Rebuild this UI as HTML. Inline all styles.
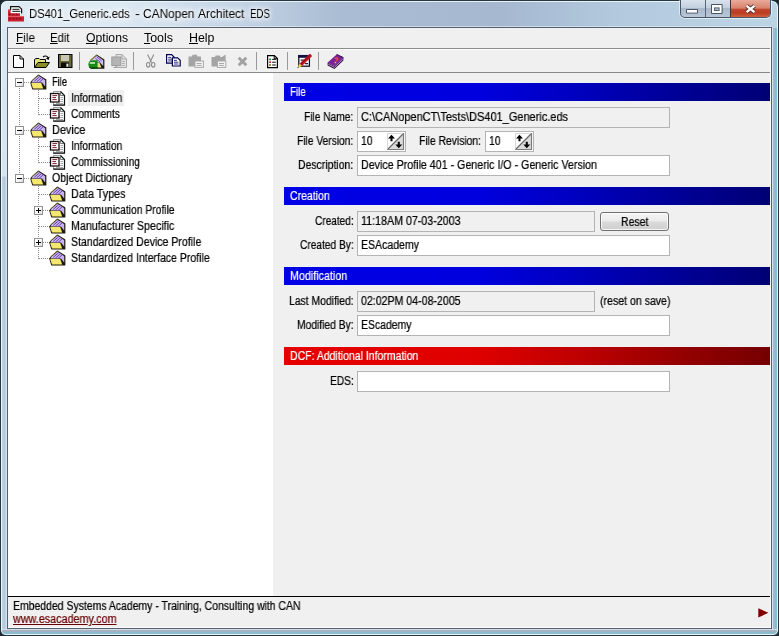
<!DOCTYPE html>
<html>
<head>
<meta charset="utf-8">
<title>DS401_Generic.eds - CANopen Architect EDS</title>
<style>
html,body{margin:0;padding:0;}
body{width:779px;height:636px;overflow:hidden;position:relative;background:#1c2a30;font-family:"Liberation Sans",sans-serif;font-size:12px;color:#000;}
.abs{position:absolute;}
svg{position:absolute;overflow:visible;}
#frame{position:absolute;left:0;top:0;width:777px;height:634px;border:1px solid #2a3640;border-radius:7px 7px 6px 6px;overflow:hidden;
 background:linear-gradient(90deg,#deeaf3 0,#dce8f2 120px,#c3d3e5 240px,#a9bcd3 340px,#a5b8d0 500px,#b3cade 620px,#bcd5e5 777px);}
#frame .hl{position:absolute;left:0;top:0;width:777px;height:634px;border-radius:6px 6px 5px 5px;box-shadow:inset 0 0 0 1px rgba(240,250,255,.85);}
#frame .bl{position:absolute;left:1px;top:27px;width:5px;height:602px;background:linear-gradient(180deg,#dbe7f2 0,#d8e5f1 148px,rgba(216,229,241,0) 149px),linear-gradient(90deg,#bfd2e3,#b2c8dc 60%,#d0e2f2 81%);}
#frame .br{position:absolute;left:771px;top:27px;width:6px;height:602px;background:linear-gradient(90deg,#d5e5ea 0,#d5e5ea 17%,#a8bccf 18%,#90b6d0 60%,#80c0d8 75%,#7fc0d8 100%);}
#frame .bb{position:absolute;left:1px;top:628px;width:775px;height:6px;background:linear-gradient(180deg,#d5dde8 0,#d5dde8 17%,#a5b2c2 18%,#a2b3c4 50%,#8abccc 55%,#8abfd0 100%);}
#client{position:absolute;left:7px;top:27px;width:763px;height:600px;border:1px solid #56616d;background:#f0f0f0;}
.t{position:absolute;white-space:pre;line-height:14px;height:14px;transform-origin:0 0;will-change:transform;-webkit-text-stroke:0.22px currentColor;}
.hdr{position:absolute;left:284px;width:486px;height:18px;}
.blue{background:linear-gradient(90deg,#0000e6 0%,#0000de 40%,#0000c0 60%,#000098 80%,#000074 100%);}
.red{background:linear-gradient(90deg,#e60000 0%,#de0000 40%,#c00000 60%,#980000 80%,#740000 100%);}
.fld{position:absolute;height:19px;border:1px solid #b4b4b4;background:#fff;}
.ro{background:#f0f0f0;}
.spin{position:absolute;width:17px;height:17px;}
.vdot{position:absolute;width:1px;background-image:linear-gradient(180deg,#8c8c8c 50%,transparent 50%);background-size:1px 2px;}
.hdot{position:absolute;height:1px;background-image:linear-gradient(90deg,#8c8c8c 50%,transparent 50%);background-size:2px 1px;}
.box{position:absolute;width:7px;height:7px;border:1px solid #919191;background:linear-gradient(135deg,#fff 40%,#d8d8d8);}
.box i{position:absolute;left:1px;top:3px;width:5px;height:1px;background:#000;}
.box b{position:absolute;left:3px;top:1px;width:1px;height:5px;background:#000;}
.sep{position:absolute;top:52px;width:1px;height:18px;background:#9a9a9a;}
</style>
</head>
<body>
<div id="frame"><div class="bl"></div><div class="br"></div><div class="bb"></div><div class="hl"></div></div>
<div class="abs" style="left:8px;top:26px;width:763px;height:1px;background:rgba(235,245,252,.55);"></div>
<div id="client"></div>
<!-- caption buttons -->
<div class="abs" style="left:680px;top:0;width:91px;height:18px;border:1px solid #4a5663;border-top:none;border-radius:0 0 5px 5px;box-sizing:border-box;overflow:hidden;background:linear-gradient(180deg,#d9e3ee 0,#c3d0df 45%,#a9b9cb 50%,#b9c8d8 100%);box-shadow:0 0 0 1px rgba(255,255,255,.55);">
 <div class="abs" style="left:24px;top:0;width:1px;height:18px;background:#5a6673;"></div>
 <div class="abs" style="left:49px;top:0;width:42px;height:18px;border-left:1px solid #4a3030;background:linear-gradient(180deg,#e9ab9c 0,#d8836d 45%,#c0462c 52%,#bb3c22 72%,#d76a48 100%);"></div>
</div>
<svg style="left:680px;top:0" width="91" height="18" viewBox="0 0 91 18">
 <rect x="6" y="9" width="12" height="4.6" rx="1" fill="#4b5563"/>
 <rect x="7" y="10" width="10" height="2.6" fill="#fff"/>
 <rect x="31" y="4" width="11.6" height="10" rx="1" fill="#4b5563"/>
 <rect x="32" y="5" width="9.6" height="8" fill="#fff"/>
 <rect x="34" y="7.4" width="5.6" height="3.6" fill="#56606e"/>
 <rect x="35" y="8.4" width="3.6" height="1.6" fill="#a9b9ca"/>
 <path d="M66.6 5.9 L74.4 12.1 M74.4 5.9 L66.6 12.1" stroke="#55302c" stroke-width="4.2" stroke-linecap="butt"/>
 <path d="M66.6 5.9 L74.4 12.1 M74.4 5.9 L66.6 12.1" stroke="#fff" stroke-width="2.4" stroke-linecap="butt"/>
</svg>
<!-- tree panel -->
<div class="abs" style="left:8px;top:73px;width:265px;height:523px;background:#fff;"></div>
<!-- bar lines -->
<div class="abs" style="left:8px;top:48px;width:763px;height:1px;background:#8c8c8c;"></div>
<div class="abs" style="left:8px;top:49px;width:763px;height:1px;background:#fff;"></div>
<div class="abs" style="left:8px;top:72px;width:763px;height:1px;background:#888;"></div>
<div class="abs" style="left:8px;top:596px;width:762px;height:1px;background:#000;"></div>
<div class="abs" style="left:770px;top:28px;width:1px;height:600px;background:#fcfcff;"></div>
<div class="abs" style="left:8px;top:627px;width:763px;height:1px;background:#fcfcff;"></div>
<!-- toolbar separators -->
<div class="sep" style="left:79px"></div><div class="sep" style="left:133px"></div><div class="sep" style="left:256px"></div><div class="sep" style="left:287px"></div><div class="sep" style="left:318px"></div>
<!-- tree selection -->
<div class="abs" style="left:68px;top:90px;width:56px;height:16px;background:#efefef;"></div>
<!-- tree dotted lines -->
<div class="vdot" style="left:19px;top:88px;height:86px;"></div>
<div class="vdot" style="left:38px;top:90px;height:25px;"></div>
<div class="vdot" style="left:38px;top:138px;height:25px;"></div>
<div class="vdot" style="left:38px;top:186px;height:73px;"></div>
<div class="hdot" style="left:24px;top:82px;width:6px;"></div>
<div class="hdot" style="left:24px;top:130px;width:6px;"></div>
<div class="hdot" style="left:24px;top:178px;width:6px;"></div>
<div class="hdot" style="left:39px;top:98px;width:11px;"></div>
<div class="hdot" style="left:39px;top:114px;width:11px;"></div>
<div class="hdot" style="left:39px;top:146px;width:11px;"></div>
<div class="hdot" style="left:39px;top:162px;width:11px;"></div>
<div class="hdot" style="left:39px;top:194px;width:11px;"></div>
<div class="hdot" style="left:43px;top:210px;width:7px;"></div>
<div class="hdot" style="left:39px;top:226px;width:11px;"></div>
<div class="hdot" style="left:43px;top:242px;width:7px;"></div>
<div class="hdot" style="left:39px;top:258px;width:11px;"></div>
<!-- expand boxes -->
<div class="box" style="left:15px;top:78px"><i></i></div>
<div class="box" style="left:15px;top:126px"><i></i></div>
<div class="box" style="left:15px;top:174px"><i></i></div>
<div class="box" style="left:34px;top:206px"><i></i><b></b></div>
<div class="box" style="left:34px;top:238px"><i></i><b></b></div>
<!-- section headers -->
<div class="hdr blue" style="top:83px"></div>
<div class="hdr blue" style="top:187px"></div>
<div class="hdr blue" style="top:267px"></div>
<div class="hdr red" style="top:347px"></div>
<!-- fields -->
<div class="fld ro" style="left:357px;top:107px;width:311px;"></div>
<div class="fld" style="left:357px;top:131px;width:47px;"></div>
<div class="fld" style="left:485px;top:131px;width:47px;"></div>
<div class="fld" style="left:357px;top:155px;width:311px;"></div>
<div class="fld ro" style="left:357px;top:211px;width:236px;"></div>
<div class="fld" style="left:357px;top:235px;width:311px;"></div>
<div class="fld ro" style="left:357px;top:291px;width:236px;"></div>
<div class="fld" style="left:357px;top:315px;width:311px;"></div>
<div class="fld" style="left:357px;top:371px;width:311px;"></div>
<!-- reset button -->
<div class="abs" style="left:600px;top:212px;width:67px;height:17px;border:1px solid #707070;border-radius:3px;background:linear-gradient(180deg,#f4f4f4 0,#ebebeb 48%,#dadada 52%,#cfcfcf 100%);box-shadow:inset 0 0 0 1px rgba(255,255,255,.8);"></div>
<svg style="left:8px;top:6px" width="16" height="16" viewBox="0 0 16 16" ><path d="M0 3.4 L12 3.4 L12 10 L16 10 L16 15.6 L0 15.6 Z" fill="#cc2030"/><path d="M0 10.4h16" stroke="#f07078" stroke-width="1" opacity=".8"/><path d="M0 4h2.4" stroke="#f07078" stroke-width="1" opacity=".8"/><path d="M1 8.4h2M4.4 8.4h2M7.8 8.4h2M1 12.6h2M4.4 12.6h2M7.8 12.6h2M11.2 12.6h2" stroke="#8e0c1c" stroke-width="1.6"/><path d="M2.6 7 L2.6 0.6 L11 0.6 L13.6 3.2 L13.6 7.2 L2.6 7.2" fill="#fff"/><path d="M2.6 4.2 L2.6 0.6 L11 0.6 L13.6 3.2 L13.6 7.4" fill="none" stroke="#111" stroke-width="1.2"/><path d="M4.4 3.3h7M4.4 5.3h8" stroke="#111" stroke-width="1"/></svg>
<svg style="left:13px;top:55px" width="11" height="13" viewBox="0 0 11 13" ><path d="M0.5 0.5 L7 0.5 L10.5 4 L10.5 12.5 L0.5 12.5 Z" fill="#fff" stroke="#000" stroke-width="1"/><path d="M7 0.5 L7 4 L10.5 4" fill="none" stroke="#000" stroke-width="1"/></svg>
<svg style="left:34px;top:55px" width="16" height="13" viewBox="0 0 16 13" ><path d="M0.5 12.5 L0.5 4.5 L2 3.5 L5 3.5 L6 4.5 L11.5 4.5 L11.5 7" fill="#e4e27a" stroke="#000" stroke-width="1"/><path d="M0.5 12.5 L4 7.5 L15.5 7.5 L12 12.5 Z" fill="#8c8c28" stroke="#000" stroke-width="1"/><path d="M9 2.2 C10.5 0.4 13.2 0.6 14.2 3 " fill="none" stroke="#000" stroke-width="1.1"/><path d="M15.6 1.6 L14.6 5 L11.8 3.6 Z" fill="#000"/></svg>
<svg style="left:58px;top:54px" width="15" height="14" viewBox="0 0 15 14" ><rect x="0.5" y="0.5" width="13.5" height="13" fill="#6a6838" stroke="#000" stroke-width="1"/><rect x="3" y="1" width="8" height="6" fill="#c8c6b4"/><rect x="3" y="8.5" width="8" height="5" fill="#0a0a0a"/><rect x="8.4" y="9.6" width="2" height="3.2" fill="#e8e8e8"/></svg>
<svg style="left:87.5px;top:53.5px" width="17" height="15" viewBox="0 0 17 15" ><path d="M8.6 0.4 L16.4 5.6 L16.4 14.8 L3 14.8 L2 8 L2.6 6 Z" fill="#1f1a0c"/><path d="M8.6 1.5 L15.2 6.2 L15.2 12 L12 8.6 L3 8.6 L3 6.6 Z" fill="#d4c4f4"/><path d="M8.6 2.6 L13.6 6.9 M7.4 4.2 L12.2 8.2" stroke="#5b3aa8" stroke-width="0.9" fill="none"/><path d="M8.6 1.2 L2.4 6.4" stroke="#8a8430" stroke-width="1.1"/><path d="M8 8.8 L11.4 8.8 L13.4 13.6 L8 13.6 Z" fill="#eee28a"/><path d="M0.4 10.2 C0.4 7.6 2.2 6.2 4.8 6.2 L9.6 6.2 L9.6 14.2 L3.6 14.2 C1.6 14.2 0.4 12.6 0.4 10.2 Z" fill="#168c16"/><path d="M0.8 12.4 C1.6 14.4 3 14.8 4.6 14.8 L9.6 14.8 L9.6 13.2 L3.6 13.2 Z" fill="#0a4a0a"/><path d="M1.8 9h5.2" stroke="#e8ffe0" stroke-width="1.4"/></svg>
<svg style="left:111px;top:54px" width="16" height="14" viewBox="0 0 16 14" ><path d="M5 0.5 L11 0.5 L15.5 5 L15.5 13.5 L5 13.5 Z" fill="#e4e4e4" stroke="#a8a8a8" stroke-width="1"/><path d="M11 0.5 L11 5 L15.5 5" fill="none" stroke="#a8a8a8"/><path d="M11 7.5h3M11 9.5h3M11 11.5h3" stroke="#b0b0b0"/><rect x="0.8" y="3" width="9" height="8.6" fill="#b4b4b4" stroke="#9c9c9c"/><path d="M2.5 13.5h3v-1.6" stroke="#a0a0a0" fill="none"/></svg>
<svg style="left:146px;top:54px" width="10" height="14" viewBox="0 0 10 14" ><path d="M1.6 0.4 L5.6 8.4 M7.8 0.4 L3.8 8.4" stroke="#8c8c8c" stroke-width="1.1" fill="none"/><ellipse cx="2.2" cy="10.8" rx="1.7" ry="2.3" fill="none" stroke="#8c8c8c" stroke-width="1.1"/><ellipse cx="7.2" cy="10.8" rx="1.7" ry="2.3" fill="none" stroke="#8c8c8c" stroke-width="1.1"/></svg>
<svg style="left:166px;top:54px" width="16" height="13" viewBox="0 0 16 13" ><path d="M0.6 0.6 L5.6 0.6 L8 3 L8 9.2 L0.6 9.2 Z" fill="#fff" stroke="#00004c" stroke-width="1.2"/><path d="M2.2 3.4h3M2.2 5.2h4M2.2 7h4" stroke="#00004c" stroke-width="0.8"/><path d="M6.4 3.8 L11.6 3.8 L14.2 6.2 L14.2 12 L6.4 12 Z" fill="#fff" stroke="#00004c" stroke-width="1.2"/><path d="M8 6.4h3M8 8.2h4.4M8 10h4.4" stroke="#00004c" stroke-width="0.8"/></svg>
<svg style="left:188px;top:54px" width="16" height="14" viewBox="0 0 16 14" ><path d="M0.5 2.5 L4 2.5 L4.6 0.8 L8.8 0.8 L9.4 2.5 L13 2.5 L13 12.5 L0.5 12.5 Z" fill="#a4a4a4"/><rect x="7" y="7" width="8.4" height="6.4" fill="#f4f4f4" stroke="#a8a8a8" stroke-width="1"/><path d="M8.6 9.5h5M8.6 11.4h5" stroke="#a8a8a8"/></svg>
<svg style="left:211px;top:54px" width="16" height="14" viewBox="0 0 16 14" ><path d="M0.5 3 L4 3 L4.6 1.4 L8.8 1.4 L9.4 3 L11 3 L14.6 0.4 L14.6 12.5 L0.5 12.5 Z" fill="#a4a4a4"/><rect x="6.4" y="7" width="8.4" height="6.4" fill="#f4f4f4" stroke="#a8a8a8" stroke-width="1"/><path d="M8 9.5h5M8 11.4h5" stroke="#a8a8a8"/></svg>
<svg style="left:236.5px;top:55.5px" width="11" height="11" viewBox="0 0 11 11" ><path d="M1.7 1.7 L9.3 9.3 M9.3 1.7 L1.7 9.3" stroke="#a2a2a2" stroke-width="3" fill="none"/></svg>
<svg style="left:267px;top:54.5px" width="11" height="13" viewBox="0 0 11 13" ><path d="M0.6 0.6 L7.4 0.6 L10.4 3.6 L10.4 12.6 L0.6 12.6 Z" fill="#fff" stroke="#000" stroke-width="1.2"/><path d="M7.2 0.8 L7.2 3.8 L10.2 3.8" fill="none" stroke="#000" stroke-width="1"/><rect x="2.2" y="3.6" width="1.8" height="1.6" fill="#207020"/><rect x="2.2" y="6.4" width="1.8" height="1.6" fill="#b02020"/><rect x="2.2" y="9.2" width="1.8" height="1.6" fill="#806010"/><path d="M5.2 4.4h3.6M5.2 7.2h3.6M5.2 10h3.6" stroke="#000" stroke-width="1"/></svg>
<svg style="left:297px;top:54px" width="15" height="14" viewBox="0 0 15 14" ><rect x="1.8" y="1.6" width="10.6" height="10.6" fill="#fff" stroke="#101020" stroke-width="1.3"/><rect x="1.2" y="1" width="11.8" height="2.8" fill="#101040"/><path d="M3.6 6.2h3.4M8 9.6h3" stroke="#202030" stroke-width="1.3"/><path d="M12.8 -0.2 L15.2 2 L5 12 L2.4 9.8 Z" fill="#c01424"/><path d="M13.6 0.6 L4 10" stroke="#7a0a14" stroke-width="0.8"/><path d="M2.4 9.8 L5 12 L0.2 14.2 Z" fill="#e4d84c"/><path d="M1.2 12.6 L0.2 14.2 L1.9 13.4 Z" fill="#403010"/></svg>
<svg style="left:327px;top:53.5px" width="17" height="15" viewBox="0 0 17 15" ><path d="M0.6 8.6 L7.4 12 L16.4 3.6 L16.4 6.6 L7.4 15 L0.6 11.6 Z" fill="#3a0c4e"/><path d="M0.6 8.6 L9.6 0.4 L16.4 3.6 L7.4 12 Z" fill="#7a1f9c"/><path d="M9.6 0.4 L16.4 3.6" stroke="#2a0838" stroke-width="1"/><path d="M1.2 10.2 L7.4 13.3 L15.8 5.4" fill="none" stroke="#c8b0d8" stroke-width="0.8"/><path d="M8 4.8 C9 3.2 11.6 4 10.4 5.8 L9 7" fill="none" stroke="#f05030" stroke-width="1.4"/><rect x="7.6" y="7.8" width="1.5" height="1.4" fill="#f0c030"/></svg>
<svg style="left:29.6px;top:74.4px" width="17" height="16" viewBox="0 0 17 16" ><path d="M8.4 0.4 L16.4 5.6 L16.4 15.6 L2.3 15.6 L0.3 9 L0.6 8 L2.2 6 Z" fill="#1f1a0c"/><path d="M8.4 1.5 L15.2 6.2 L15.2 12.5 L12 8.6 L1.6 8.6 L2.6 6.6 Z" fill="#c9b4f2"/><path d="M9.9 2.5 L4.3 7.3 M11.5 3.7 L6.4 8.1 M13.1 4.9 L9.2 8.3" stroke="#5b3aa8" stroke-width="0.9" fill="none"/><path d="M8.4 1.4 L2.2 6.6" stroke="#6b6420" stroke-width="1" fill="none"/><path d="M1.2 9 L11.2 9 L13.2 14.4 L3 14.4 Z" fill="#f3e76c"/></svg>
<svg style="left:50px;top:90.6px" width="15" height="15" viewBox="0 0 15 15" ><path d="M3.5 0.5 L10.5 0.5 L14.5 4.5 L14.5 14 L3.5 14 Z" fill="#fff" stroke="#9a9a9a" stroke-width="1"/><path d="M10.5 0.5 L14.5 4.5 L14.5 14.2 L3.2 14.2" fill="none" stroke="#111" stroke-width="1.2"/><path d="M10.5 0.8 L10.5 4.5 L14.2 4.5" fill="none" stroke="#555" stroke-width="0.8"/><path d="M10.5 6.5h2.5M10.5 8.5h2.5M8 10.5h5M6 12.5h7" stroke="#aaa" stroke-width="1"/><rect x="0.5" y="2.5" width="8.5" height="8.5" fill="#fff" stroke="#111" stroke-width="1.3"/><path d="M2.4 4.6h4.8M2.4 6.6h3.6M2.4 8.6h4.4" stroke="#8a1a2a" stroke-width="1"/></svg>
<svg style="left:50px;top:106.6px" width="15" height="15" viewBox="0 0 15 15" ><path d="M3.5 0.5 L10.5 0.5 L14.5 4.5 L14.5 14 L3.5 14 Z" fill="#fff" stroke="#9a9a9a" stroke-width="1"/><path d="M10.5 0.5 L14.5 4.5 L14.5 14.2 L3.2 14.2" fill="none" stroke="#111" stroke-width="1.2"/><path d="M10.5 0.8 L10.5 4.5 L14.2 4.5" fill="none" stroke="#555" stroke-width="0.8"/><path d="M10.5 6.5h2.5M10.5 8.5h2.5M8 10.5h5M6 12.5h7" stroke="#aaa" stroke-width="1"/><rect x="0.5" y="2.5" width="8.5" height="8.5" fill="#fff" stroke="#111" stroke-width="1.3"/><path d="M2.4 4.6h4.8M2.4 6.6h3.6M2.4 8.6h4.4" stroke="#8a1a2a" stroke-width="1"/></svg>
<svg style="left:29.6px;top:122.4px" width="17" height="16" viewBox="0 0 17 16" ><path d="M8.4 0.4 L16.4 5.6 L16.4 15.6 L2.3 15.6 L0.3 9 L0.6 8 L2.2 6 Z" fill="#1f1a0c"/><path d="M8.4 1.5 L15.2 6.2 L15.2 12.5 L12 8.6 L1.6 8.6 L2.6 6.6 Z" fill="#c9b4f2"/><path d="M9.9 2.5 L4.3 7.3 M11.5 3.7 L6.4 8.1 M13.1 4.9 L9.2 8.3" stroke="#5b3aa8" stroke-width="0.9" fill="none"/><path d="M8.4 1.4 L2.2 6.6" stroke="#6b6420" stroke-width="1" fill="none"/><path d="M1.2 9 L11.2 9 L13.2 14.4 L3 14.4 Z" fill="#f3e76c"/></svg>
<svg style="left:50px;top:138.6px" width="15" height="15" viewBox="0 0 15 15" ><path d="M3.5 0.5 L10.5 0.5 L14.5 4.5 L14.5 14 L3.5 14 Z" fill="#fff" stroke="#9a9a9a" stroke-width="1"/><path d="M10.5 0.5 L14.5 4.5 L14.5 14.2 L3.2 14.2" fill="none" stroke="#111" stroke-width="1.2"/><path d="M10.5 0.8 L10.5 4.5 L14.2 4.5" fill="none" stroke="#555" stroke-width="0.8"/><path d="M10.5 6.5h2.5M10.5 8.5h2.5M8 10.5h5M6 12.5h7" stroke="#aaa" stroke-width="1"/><rect x="0.5" y="2.5" width="8.5" height="8.5" fill="#fff" stroke="#111" stroke-width="1.3"/><path d="M2.4 4.6h4.8M2.4 6.6h3.6M2.4 8.6h4.4" stroke="#8a1a2a" stroke-width="1"/></svg>
<svg style="left:50px;top:154.6px" width="15" height="15" viewBox="0 0 15 15" ><path d="M3.5 0.5 L10.5 0.5 L14.5 4.5 L14.5 14 L3.5 14 Z" fill="#fff" stroke="#9a9a9a" stroke-width="1"/><path d="M10.5 0.5 L14.5 4.5 L14.5 14.2 L3.2 14.2" fill="none" stroke="#111" stroke-width="1.2"/><path d="M10.5 0.8 L10.5 4.5 L14.2 4.5" fill="none" stroke="#555" stroke-width="0.8"/><path d="M10.5 6.5h2.5M10.5 8.5h2.5M8 10.5h5M6 12.5h7" stroke="#aaa" stroke-width="1"/><rect x="0.5" y="2.5" width="8.5" height="8.5" fill="#fff" stroke="#111" stroke-width="1.3"/><path d="M2.4 4.6h4.8M2.4 6.6h3.6M2.4 8.6h4.4" stroke="#8a1a2a" stroke-width="1"/></svg>
<svg style="left:29.6px;top:170.4px" width="17" height="16" viewBox="0 0 17 16" ><path d="M8.4 0.4 L16.4 5.6 L16.4 15.6 L2.3 15.6 L0.3 9 L0.6 8 L2.2 6 Z" fill="#1f1a0c"/><path d="M8.4 1.5 L15.2 6.2 L15.2 12.5 L12 8.6 L1.6 8.6 L2.6 6.6 Z" fill="#c9b4f2"/><path d="M9.9 2.5 L4.3 7.3 M11.5 3.7 L6.4 8.1 M13.1 4.9 L9.2 8.3" stroke="#5b3aa8" stroke-width="0.9" fill="none"/><path d="M8.4 1.4 L2.2 6.6" stroke="#6b6420" stroke-width="1" fill="none"/><path d="M1.2 9 L11.2 9 L13.2 14.4 L3 14.4 Z" fill="#f3e76c"/></svg>
<svg style="left:48.8px;top:186.4px" width="17" height="16" viewBox="0 0 17 16" ><path d="M8.4 0.4 L16.4 5.6 L16.4 15.6 L2.3 15.6 L0.3 9 L0.6 8 L2.2 6 Z" fill="#1f1a0c"/><path d="M8.4 1.5 L15.2 6.2 L15.2 12.5 L12 8.6 L1.6 8.6 L2.6 6.6 Z" fill="#c9b4f2"/><path d="M9.9 2.5 L4.3 7.3 M11.5 3.7 L6.4 8.1 M13.1 4.9 L9.2 8.3" stroke="#5b3aa8" stroke-width="0.9" fill="none"/><path d="M8.4 1.4 L2.2 6.6" stroke="#6b6420" stroke-width="1" fill="none"/><path d="M1.2 9 L11.2 9 L13.2 14.4 L3 14.4 Z" fill="#f3e76c"/></svg>
<svg style="left:48.8px;top:202.4px" width="17" height="16" viewBox="0 0 17 16" ><path d="M8.4 0.4 L16.4 5.6 L16.4 15.6 L2.3 15.6 L0.3 9 L0.6 8 L2.2 6 Z" fill="#1f1a0c"/><path d="M8.4 1.5 L15.2 6.2 L15.2 12.5 L12 8.6 L1.6 8.6 L2.6 6.6 Z" fill="#c9b4f2"/><path d="M9.9 2.5 L4.3 7.3 M11.5 3.7 L6.4 8.1 M13.1 4.9 L9.2 8.3" stroke="#5b3aa8" stroke-width="0.9" fill="none"/><path d="M8.4 1.4 L2.2 6.6" stroke="#6b6420" stroke-width="1" fill="none"/><path d="M1.2 9 L11.2 9 L13.2 14.4 L3 14.4 Z" fill="#f3e76c"/></svg>
<svg style="left:48.8px;top:218.4px" width="17" height="16" viewBox="0 0 17 16" ><path d="M8.4 0.4 L16.4 5.6 L16.4 15.6 L2.3 15.6 L0.3 9 L0.6 8 L2.2 6 Z" fill="#1f1a0c"/><path d="M8.4 1.5 L15.2 6.2 L15.2 12.5 L12 8.6 L1.6 8.6 L2.6 6.6 Z" fill="#c9b4f2"/><path d="M9.9 2.5 L4.3 7.3 M11.5 3.7 L6.4 8.1 M13.1 4.9 L9.2 8.3" stroke="#5b3aa8" stroke-width="0.9" fill="none"/><path d="M8.4 1.4 L2.2 6.6" stroke="#6b6420" stroke-width="1" fill="none"/><path d="M1.2 9 L11.2 9 L13.2 14.4 L3 14.4 Z" fill="#f3e76c"/></svg>
<svg style="left:48.8px;top:234.4px" width="17" height="16" viewBox="0 0 17 16" ><path d="M8.4 0.4 L16.4 5.6 L16.4 15.6 L2.3 15.6 L0.3 9 L0.6 8 L2.2 6 Z" fill="#1f1a0c"/><path d="M8.4 1.5 L15.2 6.2 L15.2 12.5 L12 8.6 L1.6 8.6 L2.6 6.6 Z" fill="#c9b4f2"/><path d="M9.9 2.5 L4.3 7.3 M11.5 3.7 L6.4 8.1 M13.1 4.9 L9.2 8.3" stroke="#5b3aa8" stroke-width="0.9" fill="none"/><path d="M8.4 1.4 L2.2 6.6" stroke="#6b6420" stroke-width="1" fill="none"/><path d="M1.2 9 L11.2 9 L13.2 14.4 L3 14.4 Z" fill="#f3e76c"/></svg>
<svg style="left:48.8px;top:250.4px" width="17" height="16" viewBox="0 0 17 16" ><path d="M8.4 0.4 L16.4 5.6 L16.4 15.6 L2.3 15.6 L0.3 9 L0.6 8 L2.2 6 Z" fill="#1f1a0c"/><path d="M8.4 1.5 L15.2 6.2 L15.2 12.5 L12 8.6 L1.6 8.6 L2.6 6.6 Z" fill="#c9b4f2"/><path d="M9.9 2.5 L4.3 7.3 M11.5 3.7 L6.4 8.1 M13.1 4.9 L9.2 8.3" stroke="#5b3aa8" stroke-width="0.9" fill="none"/><path d="M8.4 1.4 L2.2 6.6" stroke="#6b6420" stroke-width="1" fill="none"/><path d="M1.2 9 L11.2 9 L13.2 14.4 L3 14.4 Z" fill="#f3e76c"/></svg>
<svg style="left:387px;top:133px" width="17" height="17" viewBox="0 0 17 17" ><rect x="0" y="0" width="17" height="17" fill="#fff"/><path d="M17 0 L17 17 L0 17 Z" fill="#dcdcdc"/><path d="M0.5 16.5 L16.5 0.5" stroke="#6c6c6c" stroke-width="1.2"/><path d="M0 0.5h16.5M0.5 0v16.5" stroke="#d8d8d8" stroke-width="1"/><path d="M16.5 0 v16.5 h-16.5" stroke="#7a7a7a" stroke-width="1.2" fill="none"/><path d="M4.5 1.8 L8 5.4 L5.5 5.4 L5.5 8.2 L3.5 8.2 L3.5 5.4 L1 5.4 Z" fill="#000"/><path d="M11.8 15.2 L8.3 11.6 L10.8 11.6 L10.8 8.8 L12.8 8.8 L12.8 11.6 L15.3 11.6 Z" fill="#000"/></svg>
<svg style="left:515px;top:133px" width="17" height="17" viewBox="0 0 17 17" ><rect x="0" y="0" width="17" height="17" fill="#fff"/><path d="M17 0 L17 17 L0 17 Z" fill="#dcdcdc"/><path d="M0.5 16.5 L16.5 0.5" stroke="#6c6c6c" stroke-width="1.2"/><path d="M0 0.5h16.5M0.5 0v16.5" stroke="#d8d8d8" stroke-width="1"/><path d="M16.5 0 v16.5 h-16.5" stroke="#7a7a7a" stroke-width="1.2" fill="none"/><path d="M4.5 1.8 L8 5.4 L5.5 5.4 L5.5 8.2 L3.5 8.2 L3.5 5.4 L1 5.4 Z" fill="#000"/><path d="M11.8 15.2 L8.3 11.6 L10.8 11.6 L10.8 8.8 L12.8 8.8 L12.8 11.6 L15.3 11.6 Z" fill="#000"/></svg>
<svg style="left:758px;top:608px" width="11" height="10" viewBox="0 0 11 10" ><path d="M0.3 0.2 L10.4 4.8 L0.3 9.6 Z" fill="#800000"/></svg>
<span class="t" style="left:29.3px;top:6.7px;font-size:12px;color:#000;transform:scaleX(0.9317);-webkit-text-stroke:0;text-shadow:0 0 4px #fff,0 0 6px #fff,0 0 8px #fff;">DS401_Generic.eds</span>
<span class="t" style="left:134.5px;top:6.7px;font-size:12px;color:#000;transform:scaleX(1.2500);-webkit-text-stroke:0;text-shadow:0 0 4px #fff,0 0 6px #fff,0 0 8px #fff;">-</span>
<span class="t" style="left:142.6px;top:6.7px;font-size:12px;color:#000;transform:scaleX(0.9879);-webkit-text-stroke:0;text-shadow:0 0 4px #fff,0 0 6px #fff,0 0 8px #fff;">CANopen</span>
<span class="t" style="left:198px;top:6.7px;font-size:12px;color:#000;transform:scaleX(0.9917);-webkit-text-stroke:0;text-shadow:0 0 4px #fff,0 0 6px #fff,0 0 8px #fff;">Architect</span>
<span class="t" style="left:249.5px;top:6.7px;font-size:12px;color:#000;transform:scaleX(0.8061);-webkit-text-stroke:0;text-shadow:0 0 4px #fff,0 0 6px #fff,0 0 8px #fff;">EDS</span>
<span class="t" style="left:15.7px;top:31px;font-size:12px;color:#000;transform:scaleX(0.9771);-webkit-text-stroke:0;"><u>F</u>ile</span>
<span class="t" style="left:50px;top:31px;font-size:12px;color:#000;transform:scaleX(0.9474);-webkit-text-stroke:0;"><u>E</u>dit</span>
<span class="t" style="left:86px;top:31px;font-size:12px;color:#000;transform:scaleX(1.0155);-webkit-text-stroke:0;"><u>O</u>ptions</span>
<span class="t" style="left:144px;top:31px;font-size:12px;color:#000;transform:scaleX(1.0351);-webkit-text-stroke:0;"><u>T</u>ools</span>
<span class="t" style="left:188.5px;top:31px;font-size:12px;color:#000;transform:scaleX(1.0329);-webkit-text-stroke:0;"><u>H</u>elp</span>
<span class="t" style="left:52px;top:75px;font-size:12px;color:#000;transform:scaleX(0.7754);">File</span>
<span class="t" style="left:70.7px;top:91px;font-size:12px;color:#000;transform:scaleX(0.8546);">Information</span>
<span class="t" style="left:70.5px;top:107px;font-size:12px;color:#000;transform:scaleX(0.8412);">Comments</span>
<span class="t" style="left:51.6px;top:123px;font-size:12px;color:#000;transform:scaleX(0.9104);">Device</span>
<span class="t" style="left:70.7px;top:139px;font-size:12px;color:#000;transform:scaleX(0.8546);">Information</span>
<span class="t" style="left:70.5px;top:155px;font-size:12px;color:#000;transform:scaleX(0.8399);">Commissioning</span>
<span class="t" style="left:51.6px;top:171px;font-size:12px;color:#000;transform:scaleX(0.8799);">Object Dictionary</span>
<span class="t" style="left:70.5px;top:187px;font-size:12px;color:#000;transform:scaleX(0.9011);">Data Types</span>
<span class="t" style="left:70.5px;top:203px;font-size:12px;color:#000;transform:scaleX(0.8574);">Communication Profile</span>
<span class="t" style="left:70.7px;top:219px;font-size:12px;color:#000;transform:scaleX(0.8900);">Manufacturer Specific</span>
<span class="t" style="left:70.7px;top:235px;font-size:12px;color:#000;transform:scaleX(0.8799);">Standardized Device Profile</span>
<span class="t" style="left:70.7px;top:251px;font-size:12px;color:#000;transform:scaleX(0.8773);">Standardized Interface Profile</span>
<span class="t" style="left:290.3px;top:85px;font-size:12px;color:#fff;transform:scaleX(0.8116);">File</span>
<span class="t" style="left:290.3px;top:189px;font-size:12px;color:#fff;transform:scaleX(0.8752);">Creation</span>
<span class="t" style="left:290.3px;top:269px;font-size:12px;color:#fff;transform:scaleX(0.8933);">Modification</span>
<span class="t" style="left:290.3px;top:349px;font-size:12px;color:#fff;transform:scaleX(0.8743);">DCF: Additional Information</span>
<span class="t" style="left:304px;top:110px;font-size:12px;color:#000;transform:scaleX(0.8480);">File Name:</span>
<span class="t" style="left:297px;top:134px;font-size:12px;color:#000;transform:scaleX(0.8511);">File Version:</span>
<span class="t" style="left:298px;top:158px;font-size:12px;color:#000;transform:scaleX(0.8712);">Description:</span>
<span class="t" style="left:419px;top:134px;font-size:12px;color:#000;transform:scaleX(0.8607);">File Revision:</span>
<span class="t" style="left:314.5px;top:214px;font-size:12px;color:#000;transform:scaleX(0.8407);">Created:</span>
<span class="t" style="left:299.5px;top:238px;font-size:12px;color:#000;transform:scaleX(0.8473);">Created By:</span>
<span class="t" style="left:288.5px;top:294px;font-size:12px;color:#000;transform:scaleX(0.8659);">Last Modified:</span>
<span class="t" style="left:296.7px;top:318px;font-size:12px;color:#000;transform:scaleX(0.8557);">Modified By:</span>
<span class="t" style="left:329.5px;top:374px;font-size:12px;color:#000;transform:scaleX(0.8460);">EDS:</span>
<span class="t" style="left:361px;top:110px;font-size:12px;color:#000;transform:scaleX(0.9155);">C:\CANopenCT\Tests\DS401_Generic.eds</span>
<span class="t" style="left:360.5px;top:134px;font-size:12px;color:#000;transform:scaleX(0.8608);">10</span>
<span class="t" style="left:488.5px;top:134px;font-size:12px;color:#000;transform:scaleX(0.8608);">10</span>
<span class="t" style="left:361px;top:158px;font-size:12px;color:#000;transform:scaleX(0.8890);">Device Profile 401 - Generic I/O - Generic Version</span>
<span class="t" style="left:361px;top:214px;font-size:12px;color:#000;transform:scaleX(0.8895);">11:18AM 07-03-2003</span>
<span class="t" style="left:361px;top:238px;font-size:12px;color:#000;transform:scaleX(0.8784);">ESAcademy</span>
<span class="t" style="left:361px;top:294px;font-size:12px;color:#000;transform:scaleX(0.8825);">02:02PM 04-08-2005</span>
<span class="t" style="left:361px;top:318px;font-size:12px;color:#000;transform:scaleX(0.8702);">EScademy</span>
<span class="t" style="left:599.5px;top:294px;font-size:12px;color:#000;transform:scaleX(0.8807);">(reset on save)</span>
<span class="t" style="left:620.5px;top:215px;font-size:12px;color:#000;transform:scaleX(0.8769);">Reset</span>
<span class="t" style="left:12.5px;top:599px;font-size:12px;color:#000;transform:scaleX(0.8708);">Embedded Systems Academy - Training, Consulting with CAN</span>
<span class="t" style="left:12.5px;top:612px;font-size:12px;color:#680000;transform:scaleX(0.8988);"><u>www.esacademy.com</u></span>
</body>
</html>
